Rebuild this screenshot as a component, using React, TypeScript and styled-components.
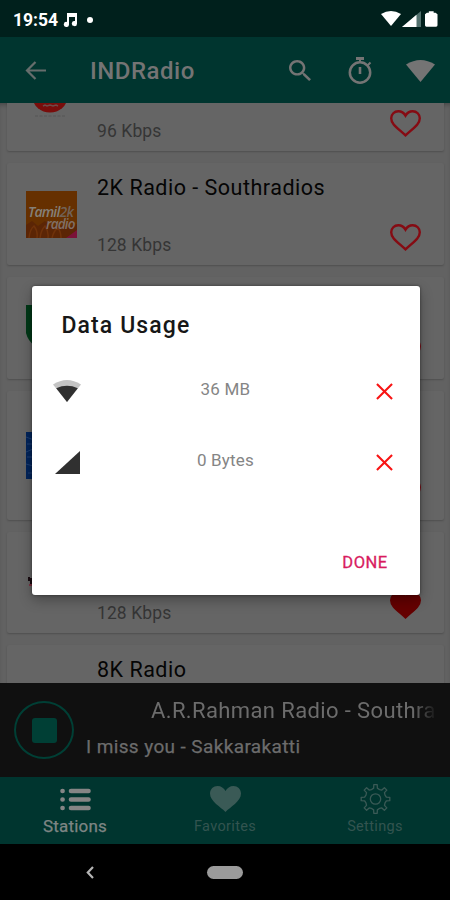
import React from "react";
import styled, { createGlobalStyle } from "styled-components";

const Global = createGlobalStyle`
  * { box-sizing: border-box; }
  html, body { margin: 0; padding: 0; background: #000; }
  body { font-family: Roboto, "Noto Sans", sans-serif; }
  svg { display: block; flex: none; }
`;

const Screen = styled.div`
  position: relative;
  width: 450px;
  height: 900px;
  overflow: hidden;
  display: grid;
  grid-template-columns: minmax(0, 1fr);
  grid-template-rows: 37px 66px 580px 94px 67px 56px;
  background: #646464;
`;

const StatusBar = styled.header`
  display: flex;
  align-items: center;
  padding: 2px 12.5px 0 13px;
  background: #00201c;
  color: #fff;
`;

const Clock = styled.span`
  font-size: 17.5px;
  font-weight: 700;
  width: 50px;
  white-space: nowrap;
`;

const Dot = styled.span`
  width: 6px;
  height: 6px;
  border-radius: 50%;
  background: #fff;
  margin-left: 10px;
`;

const StatusIcons = styled.div`
  display: flex;
  align-items: center;
  gap: 1.5px;
  margin-left: auto;
  padding-bottom: 2px;

  svg:last-child {
    margin-left: 2.5px;
  }
`;

const AppBar = styled.div`
  display: flex;
  align-items: center;
  background: #00352f;
  color: #747474;
  padding: 1px 15px 0 25px;
`;

const AppTitle = styled.h1`
  margin: 0 0 0 44px;
  padding-top: 1px;
  font-size: 24px;
  font-weight: 500;
  line-height: 28px;
  letter-spacing: 0.5px;
  white-space: nowrap;
`;

const Actions = styled.div`
  display: grid;
  grid-template-columns: 22px 25px 29px;
  align-items: center;
  margin-left: auto;
  column-gap: 35px;

  svg:nth-child(2) {
    margin-left: 2px;
  }
`;

const StationList = styled.main`
  overflow: hidden;
  display: flex;
  flex-direction: column;
  gap: 12px;
  padding: 0 6px 0 7px;
  background: #626262;
  box-shadow: inset 0 4px 4px -2px rgba(0, 0, 0, 0.25);
`;

const Card = styled.article<{ $height: number; $clip?: number }>`
  flex: none;
  display: flex;
  height: ${(p) => p.$height}px;
  margin-top: ${(p) => -(p.$clip ?? 0)}px;
  padding: 0 23px 0 19px;
  background: #656565;
  border-radius: 2px;
  box-shadow: 0 1px 2px rgba(0, 0, 0, 0.2);
`;

const Artwork = styled.div`
  flex: none;
  align-self: center;
  width: 51px;
  height: 47px;
  overflow: hidden;
  margin-right: 20px;
`;

const Details = styled.div`
  flex: 1;
  display: flex;
  flex-direction: column;
  justify-content: space-between;
  padding: 13px 0 10px;
  white-space: nowrap;
`;

const StationName = styled.div`
  font-size: 21.5px;
  line-height: 24px;
  letter-spacing: 0.5px;
  color: #050505;
`;

const Bitrate = styled.div`
  font-size: 17.5px;
  line-height: 20px;
  letter-spacing: 0.1px;
  color: #353535;
`;

const HeartSlot = styled.div`
  align-self: flex-end;
  padding-bottom: 14px;
`;

const Player = styled.section`
  display: flex;
  align-items: center;
  gap: 12px;
  padding: 0 16px 0 14px;
  background: #101010;
  color: #6c6c6c;
`;

const StopButton = styled.button`
  flex: none;
  display: grid;
  place-items: center;
  width: 60px;
  height: 58px;
  padding: 0;
  background: none;
  border: 2px solid #003f35;
  border-radius: 50%;
`;

const StopMark = styled.span`
  width: 25px;
  height: 25px;
  border-radius: 3px;
  background: #003f35;
`;

const NowPlaying = styled.div`
  flex: 1;
  min-width: 0;
  display: flex;
  flex-direction: column;
  gap: 11px;
  padding-bottom: 4px;
  white-space: nowrap;
`;

const Marquee = styled.div`
  overflow: hidden;
  padding-left: 65px;
  font-size: 22px;
  line-height: 26px;
  letter-spacing: 0.38px;
  mask-image: linear-gradient(90deg, #000 94%, transparent 101%);
`;

const Track = styled.div`
  font-size: 19px;
  line-height: 23px;
  letter-spacing: 0.38px;
  -webkit-text-stroke: 0.25px currentColor;
`;

const Tabs = styled.nav`
  display: grid;
  grid-template-columns: repeat(3, 1fr);
  background: #00352f;
`;

const Tab = styled.div<{ $active?: boolean }>`
  display: flex;
  flex-direction: column;
  align-items: center;
  justify-content: space-between;
  padding: 6px 0 8px;
  color: ${(p) => (p.$active ? "#7e8584" : "#335450")};
  font-size: ${(p) => (p.$active ? 17 : 14.5)}px;
  letter-spacing: ${(p) => (p.$active ? 0.2 : 0.35)}px;
  -webkit-text-stroke: ${(p) => (p.$active ? 0.25 : 0)}px currentColor;
  line-height: 19px;
`;

const TabIcon = styled.div`
  height: 32px;
  display: grid;
  place-items: center;
`;

const SystemNav = styled.footer`
  display: grid;
  grid-template-columns: 180px 90px 180px;
  place-items: center;
  background: #000;
`;

const HomePill = styled.span`
  width: 36px;
  height: 13px;
  border-radius: 7px;
  background: #9b9b9b;
`;

const Dialog = styled.div`
  position: absolute;
  left: 31.5px;
  top: 285.5px;
  width: 388px;
  height: 309.5px;
  display: flex;
  flex-direction: column;
  background: #fff;
  border-radius: 3px;
  box-shadow: 0 5px 13px rgba(0, 0, 0, 0.3), 0 0 3px rgba(0, 0, 0, 0.45);
`;

const DialogTitle = styled.h2`
  margin: 0;
  padding: 26px 30px 0;
  font-size: 23px;
  line-height: 28px;
  font-weight: 500;
  letter-spacing: 1.1px;
  color: #171717;
`;

const UsageRows = styled.div`
  padding-top: 16px;
`;

const UsageRow = styled.div`
  display: grid;
  grid-template-columns: 71px 1fr 71px;
  place-items: center;
  height: 71px;
`;

const Amount = styled.span`
  font-size: 17px;
  line-height: 20px;
  letter-spacing: 0.2px;
  color: #858585;
  padding-bottom: 4px;
`;

const DoneButton = styled.button`
  margin: auto 32px 22px auto;
  padding: 0;
  border: 0;
  background: none;
  font: 400 16.5px/20px Roboto, sans-serif;
  -webkit-text-stroke: 0.3px currentColor;
  letter-spacing: 0.45px;
  color: #d81b60;
`;

const HEART =
  "M15.500 25.300C7 17.500 1.200 14 1.200 8.300 1.200 4.300 4.300 1.200 8.300 1.200c3 0 5.700 1.700 7.200 4.400 1.500-2.700 4.200-4.400 7.200-4.400 4 0 7.100 3.100 7.100 7.100C29.800 14 24 17.500 15.500 25.300z";

function Heart({ filled }: { filled?: boolean }) {
  const color = filled ? "#650000" : "#850b13";
  return (
    <svg width="31" height="27" viewBox="0 0 31 27">
      <path d={HEART} fill={filled ? color : "none"} stroke={color} strokeWidth="2.400" />
    </svg>
  );
}

function CloseIcon() {
  return (
    <svg width="17" height="17" viewBox="0 0 18 18">
      <path d="M1 1l16 16M17 1L1 17" stroke="#f81414" strokeWidth="2.200" />
    </svg>
  );
}

const ArtText = styled.text`
  font-family: "Open Sans", sans-serif;
  font-style: italic;
  font-weight: 600;
  letter-spacing: -0.8px;
`;

const artworks = {
  red: (
    <svg width="51" height="47" viewBox="0 0 51 47">
      <ellipse cx="24" cy="21" rx="17" ry="14.5" fill="#790d0b" />
      <path d="M17 29l2-1 2 1 3-1 3 1 3-1 2 1" stroke="#6e4a48" strokeWidth="1.5" fill="none" />
      <path d="M9 39h31" stroke="#565656" strokeDasharray="3 1.5" />
    </svg>
  ),
  tamil: (
    <svg width="51" height="47" viewBox="0 0 51 47">
      <rect width="51" height="47" fill="#663000" />
      <path d="M0 34l6-4 6 5 7-5 7 6 7-3 7 4 11-4v14H0z" fill="#5b2505" />
      <path d="M3 47q1-9 5-12 4 5 3 12M14 47q1-8 5-12 4 6 3 12M26 47q2-8 6-10 3 4 3 10" fill="none" stroke="#6f320a" strokeWidth="1.5" />
      <path d="M40 47l11-8v8z" fill="#7b1238" />
      <ArtText x="2" y="26" fontSize="14" fill="#858078">
        Tamil<tspan fill="#716257">2k</tspan>
      </ArtText>
      <ArtText x="20" y="38" fontSize="13.500" fill="#806f67">radio</ArtText>
    </svg>
  ),
  green: (
    <svg width="51" height="47" viewBox="0 0 51 47">
      <path d="M0 0h51v28q-10 18-25 18Q4 44 0 28z" fill="#003817" />
    </svg>
  ),
  blue: (
    <svg width="51" height="47" viewBox="0 0 51 47">
      <rect width="51" height="47" fill="#02245a" />
      <path d="M0 5l8 3M1 12h6M0 20l7-3M1 25h6M0 32l7 2M2 41h6" stroke="#1e3f72" strokeWidth="1" />
    </svg>
  ),
  dark: (
    <svg width="51" height="47" viewBox="0 0 51 47">
      <path d="M2 18h2v4H2zM4 19h4v6H4z" fill="#180b10" />
      <path d="M3 25h5v2H3z" fill="#7b3040" />
    </svg>
  ),
  none: null,
};

type Station = {
  name: string;
  rate: string;
  art: keyof typeof artworks;
  height: number;
  clip?: number;
  liked?: boolean;
};

const stations: Station[] = [
  { name: "", rate: "96 Kbps", art: "red", height: 102, clip: 54 },
  { name: "2K Radio - Southradios", rate: "128 Kbps", art: "tamil", height: 102 },
  { name: "", rate: "", art: "green", height: 102 },
  { name: "", rate: "", art: "blue", height: 129 },
  { name: "", rate: "128 Kbps", art: "dark", height: 101, liked: true },
  { name: "8K Radio", rate: "", art: "none", height: 102 },
];

function GearIcon() {
  const teeth = 8;
  const points: string[] = [];
  for (let i = 0; i < teeth; i++) {
    const offsets: [number, number][] = [
      [-0.38, 10.3],
      [-0.17, 11],
      [-0.12, 14.4],
      [0.12, 14.4],
      [0.17, 11],
      [0.38, 10.3],
    ];
    for (const [da, r] of offsets) {
      const a = (i * 2 * Math.PI) / teeth + da;
      points.push(`${(15 + r * Math.sin(a)).toFixed(2)},${(15 - r * Math.cos(a)).toFixed(2)}`);
    }
  }
  return (
    <svg width="31" height="30" viewBox="0 0 30 30" fill="none" stroke="#3a5a56" strokeWidth="1.3" strokeLinejoin="round">
      <polygon points={points.join(" ")} />
      <circle cx="15" cy="15" r="5.2" />
    </svg>
  );
}

export default function App() {
  return (
    <>
      <Global />
      <Screen>
        <StatusBar>
          <Clock>19:54</Clock>
          <svg width="14" height="14" viewBox="0 0 14 14" fill="#fff">
            <path d="M4 0h10v10.5a2.6 2.6 0 1 1-2-2.5V4H6v7.4A2.6 2.6 0 1 1 4 8.9z" />
          </svg>
          <Dot />
          <StatusIcons>
            <svg width="20" height="15" viewBox="0 0 20 15">
              <path d="M0 3Q10-3 20 3L10 15z" fill="#fff" />
            </svg>
            <svg width="19" height="16" viewBox="0 0 19 16">
              <path d="M19 0v16H0z" fill="#52716e" />
              <path d="M14.500 3.800V16H0z" fill="#fff" />
            </svg>
            <svg width="12.500" height="16" viewBox="0 0 13 16">
              <path d="M4 0h5v1.500h2L13 3v11.500a1.500 1.500 0 0 1-1.500 1.500h-10A1.500 1.500 0 0 1 0 14.500V3l2-1.500h2z" fill="#fff" />
            </svg>
          </StatusIcons>
        </StatusBar>

        <AppBar>
          <svg width="21" height="19" viewBox="0 0 21 19" fill="none" stroke="#666d6c" strokeWidth="2.200">
            <path d="M21 9.500H2M10.500 1L2 9.500l8.500 8.500" />
          </svg>
          <AppTitle>INDRadio</AppTitle>
          <Actions>
            <svg width="22" height="21" viewBox="3 3 17.490 17.490" preserveAspectRatio="none" fill="#747474">
              <path d="M15.500 14h-.79l-.28-.27C15.410 12.590 16 11.110 16 9.500 16 5.910 13.090 3 9.500 3S3 5.910 3 9.500 5.910 16 9.500 16c1.610 0 3.090-.59 4.230-1.570l.27.28v.79l5 4.990L20.490 19l-4.990-5zm-6 0C7.010 14 5 11.990 5 9.500S7.010 5 9.500 5 14 7.010 14 9.500 11.990 14 9.500 14z" />
            </svg>
            <svg width="25" height="27" viewBox="0 0 25 27" fill="none" stroke="#747474">
              <circle cx="12" cy="15.500" r="10.200" strokeWidth="2.500" />
              <path d="M8 1.500h8" strokeWidth="3" />
              <path d="M12 10v7" strokeWidth="2.600" />
              <path d="M12 3v2M19.500 8.500l3-3" strokeWidth="2" />
            </svg>
            <svg width="29" height="22" viewBox="0 0 30 22" preserveAspectRatio="none" fill="#747474">
              <path d="M0 4.500Q15-4.500 30 4.500L15 22z" />
            </svg>
          </Actions>
        </AppBar>

        <StationList>
          {stations.map((s, i) => (
            <Card key={i} $height={s.height} $clip={s.clip}>
              <Artwork>{artworks[s.art]}</Artwork>
              <Details>
                <StationName>{s.name}</StationName>
                <Bitrate>{s.rate}</Bitrate>
              </Details>
              <HeartSlot>
                <Heart filled={s.liked} />
              </HeartSlot>
            </Card>
          ))}
        </StationList>

        <Player>
          <StopButton aria-label="Stop">
            <StopMark />
          </StopButton>
          <NowPlaying>
            <Marquee>A.R.Rahman Radio - Southradios</Marquee>
            <Track>I miss you - Sakkarakatti</Track>
          </NowPlaying>
        </Player>

        <Tabs>
          <Tab $active>
            <TabIcon>
              <svg width="31" height="23" viewBox="0 0 31 23" stroke="#858585" strokeWidth="4.600" strokeLinecap="round">
                <path d="M2.500 3h.1M2.500 11.500h.1M2.500 20h.1M11 3h17.500M11 11.500h17.500M11 20h17.500" />
              </svg>
            </TabIcon>
            Stations
          </Tab>
          <Tab>
            <TabIcon>
              <svg width="31" height="26" viewBox="0 0 31 26" fill="#3a5a56">
                <path d="M15.500 26C11 21 0 15.500 0 7.500 0 3 3.500 0 7.500 0c3.500 0 6.500 2 8 5 1.500-3 4.500-5 8-5 4 0 7.500 3 7.500 7.500C31 15.500 20 21 15.500 26z" />
              </svg>
            </TabIcon>
            Favorites
          </Tab>
          <Tab>
            <TabIcon>
              <GearIcon />
            </TabIcon>
            Settings
          </Tab>
        </Tabs>

        <SystemNav>
          <svg width="8" height="13" viewBox="0 0 8 13" fill="none" stroke="#b5b5b5" strokeWidth="2.200">
            <path d="M7 1L1.800 6.500 7 12" />
          </svg>
          <HomePill />
        </SystemNav>

        <Dialog role="dialog">
          <DialogTitle>Data Usage</DialogTitle>
          <UsageRows>
            <UsageRow>
              <svg width="28" height="22" viewBox="0 0 28 22">
                <path d="M0 4.500Q14-4.500 28 4.500L14 22z" fill="#c4c4c4" />
                <path d="M3.200 8.200Q14 3.500 24.800 8.200L14 22z" fill="#303030" />
              </svg>
              <Amount>36 MB</Amount>
              <CloseIcon />
            </UsageRow>
            <UsageRow>
              <svg width="25" height="23" viewBox="0 0 25 23">
                <path d="M25 0v23H0z" fill="#303030" />
              </svg>
              <Amount>0 Bytes</Amount>
              <CloseIcon />
            </UsageRow>
          </UsageRows>
          <DoneButton>DONE</DoneButton>
        </Dialog>
      </Screen>
    </>
  );
}
